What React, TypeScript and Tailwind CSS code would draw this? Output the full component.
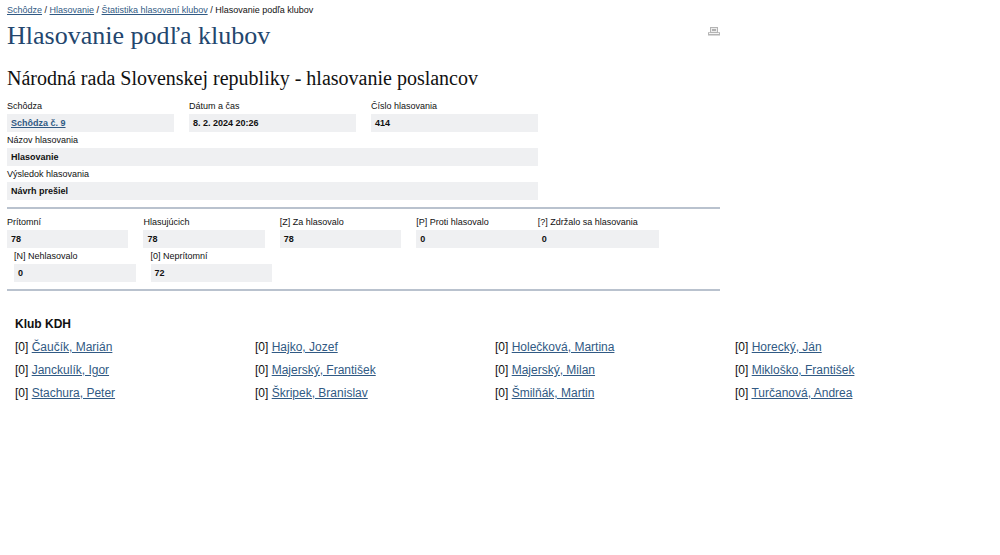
import React from 'react';

interface FieldProps {
  label: string;
  children: React.ReactNode;
}

const linkClass = 'text-[#315a84] underline';

const breadcrumbs = ['Schôdze', 'Hlasovanie', 'Štatistika hlasovaní klubov'];

const members = [
  'Čaučík, Marián',
  'Hajko, Jozef',
  'Holečková, Martina',
  'Horecký, Ján',
  'Janckulík, Igor',
  'Majerský, František',
  'Majerský, Milan',
  'Mikloško, František',
  'Stachura, Peter',
  'Škripek, Branislav',
  'Šmilňák, Martin',
  'Turčanová, Andrea',
];

const Field: React.FC<FieldProps> = ({ label, children }) => {
  return (
    <div>
      <dt className="h-4 leading-4 whitespace-nowrap">{label}</dt>
      <dd className="h-[18px] bg-[#eff0f2] pl-1 leading-[18px] font-bold">{children}</dd>
    </div>
  );
};

const PrintIcon = () => {
  return (
    <svg width="12" height="9" viewBox="0 0 12 9" fill="none" shapeRendering="crispEdges">
      <path d="M2 0h8v6H2z" fill="#b4b4b4" />
      <path d="M3 1h6v4H3z" fill="#ececec" />
      <path d="M4 2h4v2H4z" fill="#b0b0b0" />
      <path d="M0 5h2v1H0zM10 5h2v1h-2z" fill="#c4c4c4" />
      <path d="M0 6h12v2H0z" fill="#b4b4b4" />
      <path d="M1 6h10v1H1z" fill="#f4f4f4" />
      <path d="M0 8h12v1H0z" fill="#d8d8d8" />
    </svg>
  );
};

const App: React.FC = () => {
  return (
    <div className="bg-white pl-[7px] pt-1 font-['Liberation_Sans',Arial,sans-serif] text-[9px] text-[#111]">
      <nav className="h-3 leading-3" aria-label="Navigácia">
        {breadcrumbs.map((item) => (
          <React.Fragment key={item}>
            <a href="#" className={linkClass}>
              {item}
            </a>
            {' / '}
          </React.Fragment>
        ))}
        Hlasovanie podľa klubov
      </nav>

      <main>
        <div className="flex max-w-[713px] items-center justify-between pt-1">
          <h1 className="font-['Liberation_Serif','Times_New_Roman',serif] text-[26px] leading-8 text-[#23466e]">
            Hlasovanie podľa klubov
          </h1>
          <button type="button" aria-label="Tlačiť" className="mb-2.5">
            <PrintIcon />
          </button>
        </div>

        <h2 className="mt-3 font-['Liberation_Serif','Times_New_Roman',serif] text-[20px] leading-7">
          Národná rada Slovenskej republiky - hlasovanie poslancov
        </h2>

        <section className="mt-[6px] max-w-[713px] border-b-2 border-[#b9c2ce] pb-[7px]">
          <dl className="max-w-[531px]">
            <div className="grid grid-cols-3 gap-x-[15px]">
              <Field label="Schôdza">
                <a href="#" className={linkClass}>
                  Schôdza č. 9
                </a>
              </Field>
              <Field label="Dátum a čas">8. 2. 2024 20:26</Field>
              <Field label="Číslo hlasovania">414</Field>
            </div>
            <Field label="Názov hlasovania">Hlasovanie</Field>
            <Field label="Výsledok hlasovania">Návrh prešiel</Field>
          </dl>
        </section>

        <section className="max-w-[713px] border-b-2 border-[#b9c2ce] pt-[5px] pb-[7px]">
          <dl className="flex max-w-[652px]">
            <div className="flex-1 basis-[15px] pr-[15px]">
              <Field label="Prítomní">78</Field>
            </div>
            <div className="flex-1 basis-[15px] pr-[15px]">
              <Field label="Hlasujúcich">78</Field>
            </div>
            <div className="flex-1 basis-[15px] pr-[15px]">
              <Field label="[Z] Za hlasovalo">78</Field>
            </div>
            <div className="flex-1 basis-0">
              <Field label="[P] Proti hlasovalo">0</Field>
            </div>
            <div className="flex-1 basis-0">
              <Field label="[?] Zdržalo sa hlasovania">0</Field>
            </div>
          </dl>
          <dl className="ml-[7px] grid max-w-[258px] grid-cols-2 gap-x-[15px]">
            <Field label="[N] Nehlasovalo">0</Field>
            <Field label="[0] Neprítomní">72</Field>
          </dl>
        </section>

        <section className="mt-[23px] pr-[25px] pl-2 text-[12px]">
          <h3 className="leading-5 font-bold">Klub KDH</h3>
          <ul className="mt-0.5 grid grid-cols-4">
            {members.map((name) => (
              <li key={name} className="leading-[23px]">
                [0]{' '}
                <a href="#" className={linkClass}>
                  {name}
                </a>
              </li>
            ))}
          </ul>
        </section>
      </main>
    </div>
  );
};

export default App;
